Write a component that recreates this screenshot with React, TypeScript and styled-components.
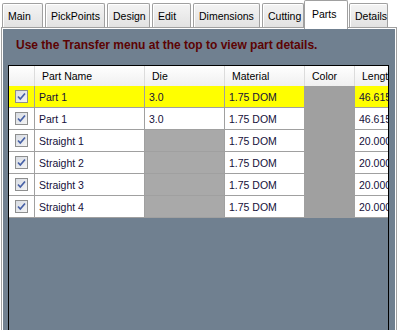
import styled, { createGlobalStyle } from "styled-components";

const GlobalStyle = createGlobalStyle`
  body {
    margin: 0;
    background: #ffffff;
    font-family: "Liberation Sans", Arial, sans-serif;
  }
`;

type TabProps = { $width: number; $selected?: boolean };
type CellProps = { $bg?: string };

const Window = styled.div`
  width: 397px;
  height: 330px;
  overflow: hidden;
  display: flex;
  flex-direction: column;
  background: #ffffff;
`;

const TabStrip = styled.div`
  display: flex;
  align-items: flex-end;
  height: 27px;
  padding-left: 2px;
  box-sizing: border-box;
  position: relative;
  z-index: 1;
`;

const Tab = styled.div<TabProps>`
  width: ${(p) => p.$width}px;
  height: ${(p) => (p.$selected ? 29 : 24)}px;
  margin: ${(p) => (p.$selected ? "0 1px -2px -2px" : "0 2px 0 0")};
  padding: ${(p) => (p.$selected ? "7px 0 0 7px" : "6px 0 0 5px")};
  box-sizing: border-box;
  border: 1px solid #a0a0a0;
  border-bottom: none;
  border-radius: 2px 2px 0 0;
  background: ${(p) =>
    p.$selected ? "#ffffff" : "linear-gradient(#f4f4f4, #e2e2e2)"};
  box-shadow: inset 1px 1px 0 #ffffff;
  font-size: 10.5px;
  line-height: 12px;
  color: #000000;
  white-space: nowrap;
  flex-shrink: 0;
`;

const Panel = styled.div`
  flex: 1;
  display: flex;
  flex-direction: column;
  margin-left: 1px;
  width: 396px;
  box-sizing: border-box;
  border: 1px solid #a0a0a0;
  border-bottom: none;
  box-shadow: inset 1px 1px 0 #ffffff, inset -1px 0 0 #ffffff;
  background: #708090;
  padding: 10px 0 0 6px;
  min-height: 0;
`;

const Message = styled.div`
  padding-left: 8px;
  font-size: 12px;
  font-weight: bold;
  line-height: 15px;
  color: #5c0303;
  white-space: nowrap;
`;

const Grid = styled.div`
  flex: 1;
  margin-top: 12px;
  width: 381px;
  box-sizing: border-box;
  border: 1px solid #000000;
  border-bottom: none;
  background: #708090;
  overflow: hidden;
`;

const columns = "26px 110px 80px 80px 50px 60px";

const HeaderRow = styled.div`
  display: grid;
  grid-template-columns: ${columns};
  height: 20px;
  background: linear-gradient(#ffffff, #f0f0f0);
`;

const HeaderCell = styled.div`
  display: flex;
  align-items: center;
  padding-left: 7px;
  border-right: 1px solid #dcdcdc;
  font-size: 10.5px;
  color: #000000;
  white-space: nowrap;
  overflow: hidden;
`;

const Row = styled.div`
  display: grid;
  grid-template-columns: ${columns};
  height: 22px;
  box-sizing: border-box;
  border-bottom: 1px solid #a0a0a0;
`;

const Cell = styled.div<CellProps>`
  display: flex;
  align-items: center;
  padding-left: 4px;
  border-right: 1px solid #a0a0a0;
  background: ${(p) => p.$bg ?? "#ffffff"};
  font-size: 10.5px;
  color: #14103a;
  white-space: nowrap;
  overflow: hidden;
`;

const CheckCell = styled(Cell)`
  justify-content: center;
  padding-left: 0;
`;

const CheckBox = styled.div`
  width: 13px;
  height: 13px;
  box-sizing: border-box;
  border: 1px solid #8e8f8f;
  background: linear-gradient(135deg, #d8dce3, #f4f4f4);
  display: flex;
  align-items: center;
  justify-content: center;
`;

const Check = () => (
  <CheckBox>
    <svg width="11" height="11" viewBox="0 0 11 11">
      <path
        d="M2 5.5 L4.3 8 L9 2.5"
        fill="none"
        stroke="#4660a6"
        strokeWidth="1.7"
      />
    </svg>
  </CheckBox>
);

const tabs = [
  { label: "Main", width: 41 },
  { label: "PickPoints", width: 60 },
  { label: "Design", width: 43 },
  { label: "Edit", width: 39 },
  { label: "Dimensions", width: 67 },
  { label: "Cutting", width: 42 },
  { label: "Parts", width: 44, selected: true },
  { label: "Details", width: 39 },
];

const YELLOW = "#ffff00";
const DIE_GRAY = "#a9a9a9";
const COLOR_GRAY = "#a0a0a0";

const parts = [
  { name: "Part 1", die: "3.0", length: "46.615", highlight: true },
  { name: "Part 1", die: "3.0", length: "46.615" },
  { name: "Straight 1", die: "", length: "20.000" },
  { name: "Straight 2", die: "", length: "20.000" },
  { name: "Straight 3", die: "", length: "20.000" },
  { name: "Straight 4", die: "", length: "20.000" },
];

export default function App() {
  return (
    <Window>
      <GlobalStyle />
      <TabStrip>
        {tabs.map((t) => (
          <Tab key={t.label} $width={t.width} $selected={t.selected}>
            {t.label}
          </Tab>
        ))}
      </TabStrip>
      <Panel>
        <Message>Use the Transfer menu at the top to view part details.</Message>
        <Grid>
          <HeaderRow>
            <HeaderCell />
            <HeaderCell>Part Name</HeaderCell>
            <HeaderCell>Die</HeaderCell>
            <HeaderCell>Material</HeaderCell>
            <HeaderCell>Color</HeaderCell>
            <HeaderCell>Length</HeaderCell>
          </HeaderRow>
          {parts.map((p, i) => {
            const bg = p.highlight ? YELLOW : "#ffffff";
            return (
              <Row key={i}>
                <CheckCell $bg={bg}>
                  <Check />
                </CheckCell>
                <Cell $bg={bg}>{p.name}</Cell>
                <Cell $bg={p.die ? bg : DIE_GRAY}>{p.die}</Cell>
                <Cell $bg={bg}>1.75 DOM</Cell>
                <Cell $bg={COLOR_GRAY} />
                <Cell $bg={bg}>{p.length}</Cell>
              </Row>
            );
          })}
        </Grid>
      </Panel>
    </Window>
  );
}
